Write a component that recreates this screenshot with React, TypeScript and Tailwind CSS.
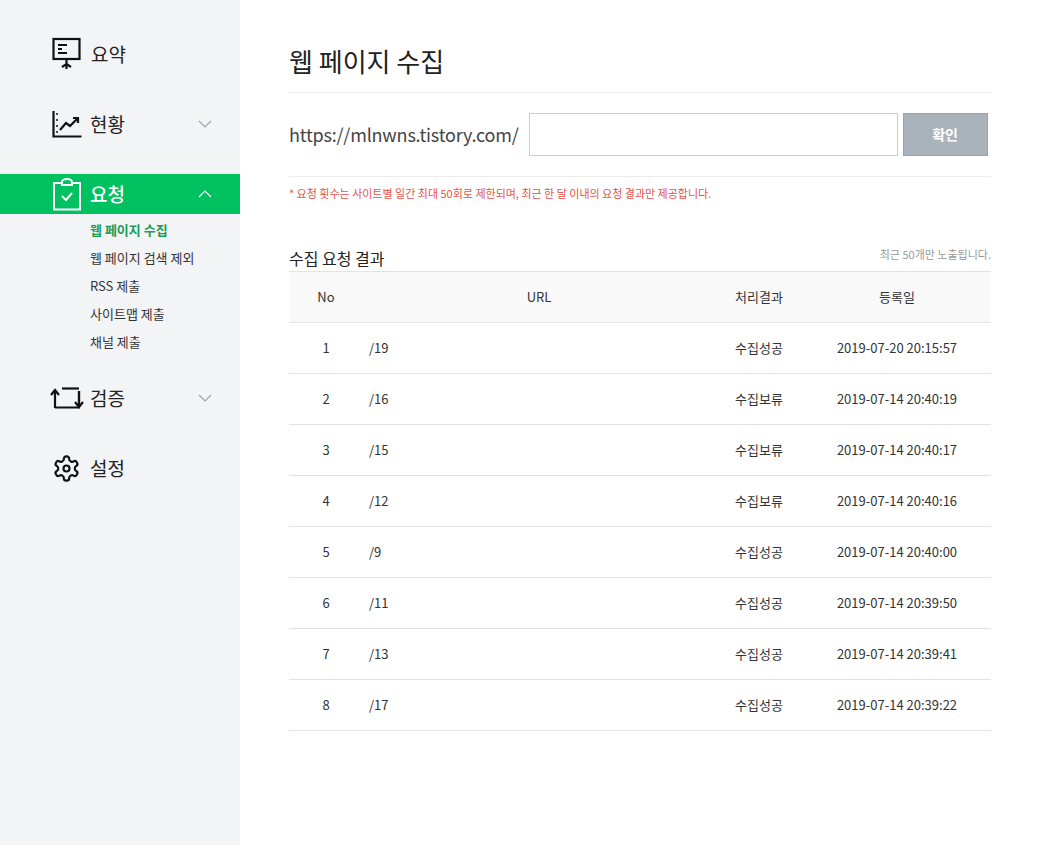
import React from "react";

const font = { fontFamily: '"Noto Sans CJK KR", "Noto Sans", sans-serif' };

const Chevron = ({ up, color = "#9ca3af" }: { up?: boolean; color?: string }) => (
  <svg width="14" height="8" viewBox="0 0 14 8" fill="none" stroke={color} strokeWidth="1.2">
    {up ? <path d="M1 7L7 1L13 7" /> : <path d="M1 1L7 7L13 1" />}
  </svg>
);

const rows = [
  [1, "/19", "수집성공", "2019-07-20 20:15:57"],
  [2, "/16", "수집보류", "2019-07-14 20:40:19"],
  [3, "/15", "수집보류", "2019-07-14 20:40:17"],
  [4, "/12", "수집보류", "2019-07-14 20:40:16"],
  [5, "/9", "수집성공", "2019-07-14 20:40:00"],
  [6, "/11", "수집성공", "2019-07-14 20:39:50"],
  [7, "/13", "수집성공", "2019-07-14 20:39:41"],
  [8, "/17", "수집성공", "2019-07-14 20:39:22"],
];

export default function App() {
  return (
    <div className="flex w-[1038px] h-[845px] bg-white text-[#222]" style={font}>
      <aside className="w-[240px] bg-[#f3f4f6] pt-[34px] shrink-0">
        <div className="h-[40px] flex items-center pl-[52px]">
          <svg width="29" height="34" viewBox="0 0 29 34" fill="none" stroke="#111" strokeWidth="2.2">
            <rect x="1.5" y="2" width="26" height="20" />
            <path d="M6 8h9M6 12h4M6 16h9" strokeWidth="1.8" />
            <path d="M14.5 22v10M10 30l4.5-3 4.5 3" />
          </svg>
          <span className="ml-[10px] text-[19px]">요약</span>
        </div>
        <div className="h-[40px] flex items-center pl-[52px] mt-[30px]">
          <svg width="30" height="28" viewBox="0 0 30 28" fill="none" stroke="#111" strokeWidth="2.2">
            <path d="M1.5 1v25.5h28" />
            <path d="M4 4h2M4 10h2M4 16h2M4 22h2" strokeWidth="1.6" />
            <path d="M8 20l6-7 4 3 8-8" />
            <path d="M21 8h5v5" />
          </svg>
          <span className="ml-[8px] text-[19px]">현황</span>
          <span className="ml-auto mr-[28px]"><Chevron /></span>
        </div>
        <div className="h-[40px] flex items-center pl-[52px] mt-[30px] bg-[#00c160] text-white">
          <svg width="30" height="33" viewBox="0 0 30 33" fill="none" stroke="#fff" strokeWidth="2">
            <path d="M10 5H2v26.5h26V5h-8" />
            <path d="M10 7V4c0-1.5 2-3 5-3s5 1.5 5 3v3z" />
            <path d="M10 18l4 4 6-7" />
          </svg>
          <span className="ml-[8px] text-[19px] font-medium">요청</span>
          <span className="ml-auto mr-[28px]"><Chevron up color="#fff" /></span>
        </div>
        <div className="pl-[90px] pt-[2px] text-[13px] text-[#333] flex flex-col">
          <div className="h-[28px] flex items-center font-bold text-[#1a9d57]">웹 페이지 수집</div>
          <div className="h-[28px] flex items-center">웹 페이지 검색 제외</div>
          <div className="h-[28px] flex items-center">RSS 제출</div>
          <div className="h-[28px] flex items-center">사이트맵 제출</div>
          <div className="h-[28px] flex items-center">채널 제출</div>
        </div>
        <div className="h-[40px] flex items-center pl-[50px] mt-[22px]">
          <svg width="34" height="22" viewBox="0 0 34 22" fill="none" stroke="#111" strokeWidth="2.2">
            <path d="M5 21V4" />
            <path d="M1 8l4-5 4 5" />
            <path d="M5 20.5h24V4" />
            <path d="M29 4v15" />
            <path d="M25 15l4 5 4-5" />
            <path d="M12 1.5h17" />
          </svg>
          <span className="ml-[6px] text-[19px]">검증</span>
          <span className="ml-auto mr-[28px]"><Chevron /></span>
        </div>
        <div className="h-[40px] flex items-center pl-[52px] mt-[30px]">
          <svg width="29" height="29" viewBox="0 0 24 24" fill="none" stroke="#111" strokeWidth="1.8">
            <path d="M12.22 2h-.44a2 2 0 0 0-2 2v.18a2 2 0 0 1-1 1.730l-.43.25a2 2 0 0 1-2 0l-.15-.08a2 2 0 0 0-2.73.73l-.22.38a2 2 0 0 0 .73 2.73l.15.1a2 2 0 0 1 1 1.72v.51a2 2 0 0 1-1 1.74l-.15.09a2 2 0 0 0-.73 2.73l.22.38a2 2 0 0 0 2.73.73l.15-.08a2 2 0 0 1 2 0l.43.25a2 2 0 0 1 1 1.73V20a2 2 0 0 0 2 2h.44a2 2 0 0 0 2-2v-.18a2 2 0 0 1 1-1.73l.43-.25a2 2 0 0 1 2 0l.15.08a2 2 0 0 0 2.73-.73l.22-.39a2 2 0 0 0-.73-2.730l-.15-.08a2 2 0 0 1-1-1.74v-.5a2 2 0 0 1 1-1.74l.15-.09a2 2 0 0 0 .73-2.73l-.22-.38a2 2 0 0 0-2.73-.73l-.15.08a2 2 0 0 1-2 0l-.43-.25a2 2 0 0 1-1-1.73V4a2 2 0 0 0-2-2z" />
            <circle cx="12" cy="12" r="2.5" />
          </svg>
          <span className="ml-[9px] text-[19px]">설정</span>
        </div>
      </aside>
      <main className="w-[702px] ml-[49px] pt-[42px]">
        <h1 className="text-[26px] leading-[38px] pb-[12px] border-b border-[#eee]">웹 페이지 수집</h1>
        <div className="flex items-center h-[84px] border-b border-[#eee]">
          <span className="text-[18px] text-[#444] mr-[10px] tracking-[-0.2px]">https://mlnwns.tistory.com/</span>
          <input className="w-[369px] h-[43px] border border-[#ccc] outline-none" />
          <button className="ml-[5px] w-[85px] h-[43px] bg-[#aab3bc] border border-[#9aa3ac] text-white text-[14px] font-bold">확인</button>
        </div>
        <p className="text-[11px] text-[#e5534b] mt-[8px]">* 요청 횟수는 사이트별 일간 최대 50회로 제한되며, 최근 한 달 이내의 요청 결과만 제공합니다.</p>
        <div className="mt-[44px] flex justify-between items-end pb-[7px]">
          <span className="text-[16px] -mb-[8px]">수집 요청 결과</span>
          <span className="text-[11px] text-[#999]">최근 50개만 노출됩니다.</span>
        </div>
        <table className="w-full text-[13px] text-[#333] border-collapse mt-[2px]">
          <thead>
            <tr className="h-[51px] bg-[#f9f9f9] border-t border-b border-[#e3e3e3]">
              <th className="w-[74px] font-normal">No</th>
              <th className="w-[352px] font-normal">URL</th>
              <th className="w-[88px] font-normal">처리결과</th>
              <th className="font-normal">등록일</th>
            </tr>
          </thead>
          <tbody>
            {rows.map((r) => (
              <tr key={r[0]} className="h-[51px] border-b border-[#e3e3e3]">
                <td className="text-center">{r[0]}</td>
                <td className="pl-[6px]">{r[1]}</td>
                <td className="text-center">{r[2]}</td>
                <td className="text-center">{r[3]}</td>
              </tr>
            ))}
          </tbody>
        </table>
      </main>
    </div>
  );
}
